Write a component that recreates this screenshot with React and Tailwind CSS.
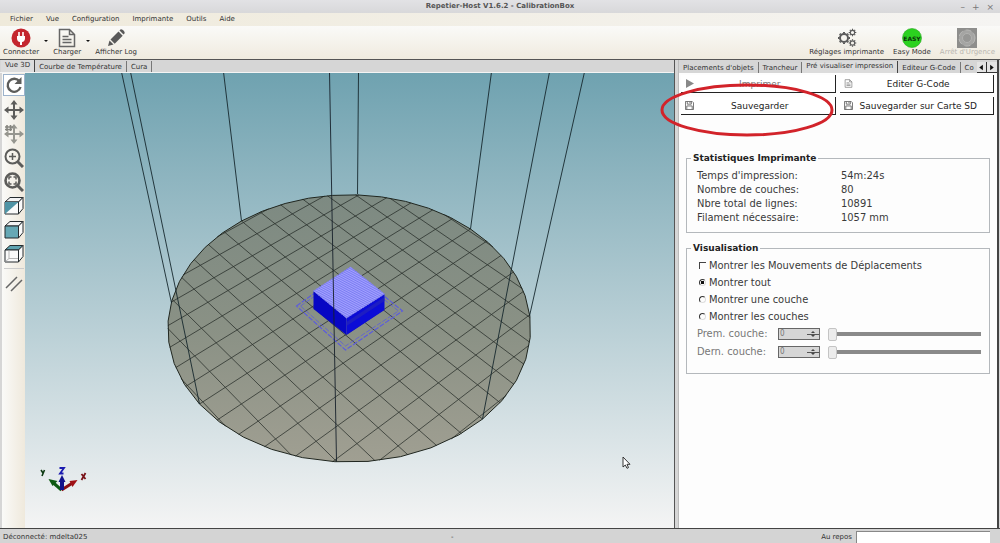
import { useState } from "react";

const MENUS = ["Fichier", "Vue", "Configuration", "Imprimante", "Outils", "Aide"];

const STATS = [
  ["Temps d'impression:", "54m:24s"],
  ["Nombre de couches:", "80"],
  ["Nbre total de lignes:", "10891"],
  ["Filament nécessaire:", "1057 mm"],
];

const MODES = [
  { id: "all", label: "Montrer tout" },
  { id: "one", label: "Montrer une couche" },
  { id: "range", label: "Montrer les couches" },
];

// perspective projection of the unit bed (radius 1) into the viewport
const project = (u, v) => {
  const w = 1 + 0.0937 * u + 0.1187 * v;
  return [(348.2 + 166.9 * u - 77.5 * v) / w, (308.3 - 57.85 * u - 61.07 * v) / w];
};

const toPoint = ([x, y]) => `${x.toFixed(1)},${y.toFixed(1)}`;

const RIM = Array.from({ length: 40 }, (_, i) => {
  const a = (i * Math.PI) / 20 + Math.PI / 4;
  return toPoint(project(Math.cos(a), Math.sin(a)));
}).join(" ");

const STEP = 0.14;
const GRID = [];
for (let i = -7; i <= 7; i++) {
  const p = i * STEP;
  const q = Math.sqrt(Math.max(0, 1 - p * p));
  GRID.push([project(p, -q), project(p, q)], [project(-q, p), project(q, p)]);
}

const FRAME = [
  [122, 72, 172, 303],
  [131, 72, 200, 404],
  [224, 72, 242, 221],
  [359, 72, 358, 194],
  [492, 72, 471, 229],
  [550, 72, 483, 419],
  [585, 72, 530, 316],
];

function Scene() {
  return (
    <svg viewBox="25 73 650 455" preserveAspectRatio="xMidYMid slice" className="block h-full w-full">
      <defs>
        <linearGradient id="bed" x1="0" y1="0" x2="0" y2="1">
          <stop offset="0" stopColor="#7d8a82" />
          <stop offset="0.5" stopColor="#8a9185" />
          <stop offset="1" stopColor="#a09f92" />
        </linearGradient>
        <pattern id="layers" width="3" height="2" patternUnits="userSpaceOnUse" patternTransform="rotate(28)">
          <rect width="3" height="2" fill="#a3a3ff" />
          <rect width="3" height="1" fill="#7b7bf2" />
        </pattern>
      </defs>
      <polygon points={RIM} fill="url(#bed)" stroke="#20261f" strokeWidth="1" />
      <g stroke="#1d231f" strokeWidth="0.8" opacity="0.85">
        {GRID.map(([a, b], i) => (
          <line key={i} x1={a[0]} y1={a[1]} x2={b[0]} y2={b[1]} />
        ))}
      </g>
      <g stroke="#16282e" strokeWidth="0.9">
        {FRAME.map(([x1, y1, x2, y2]) => (
          <line key={x1} x1={x1} y1={y1} x2={x2} y2={y2} />
        ))}
      </g>
      <g fill="none" stroke="#5c5cdc" strokeWidth="1.2" strokeDasharray="5 1.5">
        <polygon points="297,306 350,268 403,311 346,350" />
        <polygon points="301,306 350,272 399,311 346,346" strokeWidth="0.8" />
      </g>
      <polygon points="314,291 347,318 347,335 314,309" fill="#0707c4" />
      <polygon points="347,318 385,294 385,310 347,335" fill="#0c0cd6" />
      <polygon points="347,326 385,301 385,297 347,322" fill="#2a2ab4" opacity="0.6" />
      <polygon points="314,291 351,267 385,294 347,318" fill="url(#layers)" stroke="#7f7ff4" strokeDasharray="2 1" strokeWidth="1" />
      <line x1="330" y1="72" x2="337" y2="461" stroke="#16202a" strokeWidth="0.9" />
      <AxisMarker />
    </svg>
  );
}

function AxisMarker() {
  return (
    <g strokeWidth="3" fill="none">
      <path d="M62 490 L54 483" stroke="#0d5a12" />
      <path d="M49 479 L58 481 L53 486 Z" fill="#0d5a12" />
      <path d="M62 490 L73 483" stroke="#8a0f14" />
      <path d="M78 480 L70 481 L73 487 Z" fill="#a01015" />
      <path d="M62.500 490 L62.500 481" stroke="#12128c" strokeWidth="4" />
      <path d="M62.500 475 L59 482 L66 482 Z" fill="#12128c" />
      <path d="M41.500 470 L43.500 473 M45 470 L42.500 476" stroke="#0c3a12" strokeWidth="1.600" />
      <path d="M60 468 L64.500 468 L60.500 473.500 L64 473.500" stroke="#1a1ab0" strokeWidth="1.800" />
      <path d="M82 474 L86 479 M86 473 L82 480" stroke="#7a1218" strokeWidth="1.800" />
    </g>
  );
}

function PlugIcon() {
  return (
    <svg viewBox="0 0 20 20" className="h-5 w-5">
      <circle cx="10" cy="10" r="9.500" fill="#c4262e" />
      <path d="M6 8h8v2.500c0 2-1.300 3.300-3 3.500v3H9v-3c-1.700-.2-3-1.500-3-3.500z" fill="#fff" />
      <path d="M8 4v5M12 4v5" stroke="#fff" strokeWidth="1.600" />
    </svg>
  );
}

function FileIcon({ className }) {
  return (
    <svg viewBox="0 0 18 20" className={className} fill="none" stroke="currentColor" strokeWidth="1.500">
      <path d="M1.500 1.500h10l5 5v12h-15z M11.500 1.500v5h5" />
      <path d="M4.500 8.500h6M4.500 11.500h9M4.500 14.500h9" />
    </svg>
  );
}

function PencilIcon() {
  return (
    <svg viewBox="0 0 20 20" className="h-5 w-5" fill="#595959">
      <path d="M2 18l1.500-5.500 4 4z" />
      <path d="M4.500 11.500l8-8 4.200 4.200-8 8z" />
      <path d="M13.500 2.500l1-1c1.500-1 5 2.500 4 4l-1 1z" />
    </svg>
  );
}

function Gear({ cx, cy, r, width }) {
  return (
    <g stroke="#5b5b5b" fill="none">
      <circle cx={cx} cy={cy} r={r} strokeWidth={width} />
      {[0, 45, 90, 135, 180, 225, 270, 315].map((a) => (
        <path key={a} d={`M${cx} ${cy - r - width / 2 + 0.3}v-1.300`} strokeWidth={width} transform={`rotate(${a} ${cx} ${cy})`} />
      ))}
    </g>
  );
}

function GearsIcon() {
  return (
    <svg viewBox="0 0 20 20" className="h-5 w-5">
      <Gear cx={7} cy={10} r={4} width={2} />
      <Gear cx={15.5} cy={4.5} r={2.2} width={1.2} />
      <Gear cx={15.5} cy={15} r={2.2} width={1.2} />
    </svg>
  );
}

function EasyIcon() {
  return (
    <svg viewBox="0 0 20 20" className="h-5 w-5">
      <circle cx="10" cy="10" r="9.500" fill="#2bd21f" stroke="#27a51f" strokeWidth="0.600" />
      <text x="10" y="12.500" textAnchor="middle" fontSize="6" fontWeight="700" fontFamily="DejaVu Sans, sans-serif" fill="#0c360b">
        EASY
      </text>
    </svg>
  );
}

function StopIcon() {
  return (
    <svg viewBox="0 0 20 20" className="h-5 w-5">
      <rect width="20" height="20" fill="#8e8e8c" />
      <circle cx="10" cy="10" r="8" fill="#a5a5a3" stroke="#b8b8b6" strokeWidth="1" strokeDasharray="6 3" />
      <circle cx="10" cy="10" r="4.500" fill="#979795" stroke="#b2b2b0" />
    </svg>
  );
}

function SaveIcon() {
  return (
    <svg viewBox="0 0 10 10" className="h-[9px] w-[9px]" fill="none" stroke="#666" strokeWidth="1">
      <path d="M.5.500h7.500l1.500 1.500v7.500h-9z M2.500.500v3h4.500v-3 M2 9.500v-4h6v4 M5.500 1v1.500" />
    </svg>
  );
}

function ArrowsIcon({ faded }) {
  const color = faded ? "#96968f" : "#5c5c5a";
  return (
    <svg viewBox="0 0 20 20" className="h-5 w-5">
      <path d="M10 3v14M3 10h14" stroke={color} strokeWidth="2" />
      <path d="M10 0l3.500 4.500h-7zM10 20l3.500-4.500h-7zM0 10l4.500-3.500v7zM20 10l-4.500-3.500v7z" fill={color} />
      {faded && <path d="M1 3h8M1 5.500h7M3 1v6M6.500 1v6" stroke="#85857f" strokeWidth="1.600" />}
    </svg>
  );
}

function RotateIcon() {
  return (
    <svg viewBox="0 0 20 20" className="h-5 w-5">
      <path d="M15.500 6.500a6.500 6.500 0 1 0 1 5.500" fill="none" stroke="#5c5c5a" strokeWidth="2.400" />
      <path d="M17.500 2v7h-7z" fill="#5c5c5a" />
    </svg>
  );
}

function LensIcon({ fit }) {
  return (
    <svg viewBox="0 0 20 20" className="h-5 w-5" fill="none" stroke="#5c5c5a">
      <circle cx="8.500" cy="8.500" r="7" strokeWidth={fit ? 2.6 : 2} />
      <path d="M13.500 13.500l5.500 5.500" strokeWidth="3" />
      {fit ? (
        <path d="M5 7.500v-2.500h2.500M9.500 5h2.500v2.500M12 9.500v2.500h-2.500M7.500 12h-2.500v-2.500" strokeWidth="1.500" />
      ) : (
        <path d="M8.500 5v7M5 8.500h7" strokeWidth="1.500" />
      )}
    </svg>
  );
}

function CubeIcon({ face }) {
  return (
    <svg viewBox="0 0 20 20" className="h-5 w-5" stroke="#252b2e" strokeWidth="1" strokeLinejoin="round">
      <path d="M1 6l5-4.500h13l-4.500 4.500z" fill={face === "top" ? "#5fa3b0" : "#f4f4f4"} />
      <path d="M14.500 6l4.500-4.500v11l-4.500 5.500z" fill="#fafafa" />
      <path d="M1 6h13.500v12h-13.500z" fill={face === "front" ? "#66a8b5" : "#fafafa"} />
      {face === "half" && <path d="M1 6h13.500l-13.500 12z" fill="#4f94a6" stroke="none" />}
      {face === "top" && <path d="M5 6.500v8h9M5 14.500l-3.500 3" fill="none" stroke="#b5b5b5" />}
    </svg>
  );
}

function ParallelIcon() {
  return (
    <svg viewBox="0 0 20 20" className="h-5 w-5" stroke="#666" strokeWidth="1.500">
      <path d="M2 15L13 4M7 18L18 7" />
    </svg>
  );
}

const TOOLS = [
  ["Rotation", <RotateIcon />],
  ["Déplacer la vue", <ArrowsIcon />],
  ["Déplacer l'objet", <ArrowsIcon faded />],
  ["Zoom", <LensIcon />],
  ["Ajuster", <LensIcon fit />],
  ["Vue isométrique", <CubeIcon face="half" />],
  ["Vue de face", <CubeIcon face="front" />],
  ["Vue de dessus", <CubeIcon face="top" />],
];

function ToolbarButton({ icon, label, disabled }) {
  return (
    <button type="button" disabled={disabled} className="flex flex-col items-center whitespace-nowrap disabled:text-[#b9b6b0]">
      {icon}
      <span className="leading-[9px]">{label}</span>
    </button>
  );
}

function DropArrow() {
  return (
    <svg viewBox="0 0 4 2" className="mt-3 h-[2px] w-1">
      <path d="M0 0h4l-2 2z" fill="#111" />
    </svg>
  );
}

function Tab({ active, children }) {
  return (
    <button
      type="button"
      role="tab"
      aria-selected={Boolean(active)}
      className={`shrink-0 whitespace-nowrap border-r px-1 leading-[10px] ${
        active ? "h-[12px] border-[#444] bg-[#dcdcdc] pb-[2px]" : "h-[11px] border-[#777]"
      }`}
    >
      {children}
    </button>
  );
}

function PanelButton({ icon, children, disabled }) {
  return (
    <button
      type="button"
      disabled={disabled}
      className="flex h-[18px] min-w-0 items-center border-b border-r border-[#222] bg-white px-1 disabled:text-[#777]"
    >
      <span className="flex w-3 shrink-0">{icon}</span>
      <span className="flex-1 whitespace-nowrap pr-2 text-center">{children}</span>
    </button>
  );
}

function LayerRow({ id, label }) {
  return (
    <div className="flex h-[18px] items-center text-[#777]">
      <label htmlFor={id} className="w-[81px] shrink-0">
        {label}
      </label>
      <div className="flex h-[12px] w-[42px] shrink-0 border border-[#666] bg-[#d6d6d6]">
        <input id={id} type="text" defaultValue="0" disabled className="w-0 min-w-0 flex-1 pl-px text-[8px] leading-[10px]" />
        <span className="flex w-3 flex-col divide-y divide-[#555]">
          <button type="button" disabled aria-label="Augmenter" className="flex flex-1 items-center justify-center">
            <svg viewBox="0 0 6 3" className="h-[3px] w-[6px]" fill="#444"><path d="M1 3l2-2 2 2z" /></svg>
          </button>
          <button type="button" disabled aria-label="Diminuer" className="flex flex-1 items-center justify-center">
            <svg viewBox="0 0 6 3" className="h-[3px] w-[6px]" fill="#444"><path d="M1 0l2 2 2-2z" /></svg>
          </button>
        </span>
      </div>
      <input
        type="range"
        disabled
        defaultValue="0"
        aria-label={label}
        className="ml-2 h-[13px] min-w-0 flex-1 appearance-none bg-transparent bg-[linear-gradient(#8a8a8a,#8a8a8a)] bg-[length:100%_4px] bg-center bg-no-repeat [&::-webkit-slider-thumb]:h-[13px] [&::-webkit-slider-thumb]:w-[9px] [&::-webkit-slider-thumb]:appearance-none [&::-webkit-slider-thumb]:rounded-[2px] [&::-webkit-slider-thumb]:border [&::-webkit-slider-thumb]:border-[#c4c4c4] [&::-webkit-slider-thumb]:bg-[#ececec]"
      />
    </div>
  );
}

function PreviewPanel() {
  const [mode, setMode] = useState("all");
  const [moves, setMoves] = useState(false);

  return (
    <div className="flex-1 bg-[#fdfdfd] pl-[2px] pr-[3px] pt-[2px] text-[9px] leading-[14px] text-[#3a3a3a]">
      <div className="relative grid grid-cols-2 gap-1 text-[#222]">
        <PanelButton
          disabled
          icon={<svg viewBox="0 0 9 9" className="h-[9px] w-[9px]"><path d="M1 0l8 4.500-8 4.500z" fill="#888" /></svg>}
        >
          Imprimer
        </PanelButton>
        <PanelButton icon={<FileIcon className="h-[9px] w-[9px] text-[#777]" />}>Editer G-Code</PanelButton>
        <PanelButton icon={<SaveIcon />}>Sauvegarder</PanelButton>
        <PanelButton icon={<SaveIcon />}>Sauvegarder sur Carte SD</PanelButton>
        <svg viewBox="0 0 174 56" className="pointer-events-none absolute -left-[21px] top-[7px] h-14 w-[174px]" fill="none">
          <ellipse cx="87" cy="28" rx="85" ry="25" stroke="#d2232a" strokeWidth="3" />
        </svg>
      </div>

      <div className="pl-[5px] pr-1 pt-[37px] font-['DejaVu_Sans_Condensed','DejaVu_Sans',sans-serif] text-[11px]">
        <fieldset className="border border-[#b4b8bc] pb-[7px] pl-[10px] pr-2">
          <legend className="-ml-[6px] px-[2px] font-['DejaVu_Sans',sans-serif] text-[9px] font-bold leading-[12px] text-[#222]">
            Statistiques Imprimante
          </legend>
          <dl className="grid grid-cols-[144px_1fr] pt-[5px]">
            {STATS.map(([name, value]) => (
              <div key={name} className="contents">
                <dt>{name}</dt>
                <dd>{value}</dd>
              </div>
            ))}
          </dl>
        </fieldset>

        <fieldset className="mt-[9px] border border-[#b4b8bc] pb-[12px] pl-[10px] pr-2">
          <legend className="-ml-[6px] px-[2px] font-['DejaVu_Sans',sans-serif] text-[9px] font-bold leading-[12px] text-[#222]">
            Visualisation
          </legend>
          <div className="flex flex-col pl-[2px] pt-[3px]">
            <label className="flex h-[17px] items-center gap-[3px]">
              <input
                type="checkbox"
                checked={moves}
                onChange={(e) => setMoves(e.target.checked)}
                className="h-[7px] w-[7px] appearance-none border-l border-t border-[#444] checked:bg-[#444]"
              />
              Montrer les Mouvements de Déplacements
            </label>
            {MODES.map(({ id, label }) => (
              <label key={id} className="flex h-[17px] items-center gap-[3px]">
                <input
                  type="radio"
                  name="mode"
                  checked={mode === id}
                  onChange={() => setMode(id)}
                  className="h-[7px] w-[7px] appearance-none rounded-full border border-b-[#ddd] border-l-[#333] border-r-[#ddd] border-t-[#333] checked:bg-[radial-gradient(#111_40%,transparent_50%)]"
                />
                {label}
              </label>
            ))}
          </div>
          <LayerRow id="first-layer" label="Prem. couche:" />
          <LayerRow id="last-layer" label="Dern. couche:" />
        </fieldset>
      </div>
    </div>
  );
}

export default function App() {
  return (
    <div className="flex h-screen flex-col overflow-hidden bg-[#d6d6d6] font-['DejaVu_Sans','Liberation_Sans',sans-serif] text-[7px] text-[#333]">
      <header className="grid h-[13px] shrink-0 grid-cols-[1fr_auto_1fr] items-center bg-linear-to-b from-[#e2e2e5] to-[#d8d8da] text-[#555]">
        <h1 className="col-start-2 text-[7px] font-bold">Repetier-Host V1.6.2 - CalibrationBox</h1>
        <div className="flex justify-end gap-[7px] pr-[6px] text-[9px] leading-[12px] text-[#777]">
          <button type="button" aria-label="Réduire">–</button>
          <button type="button" aria-label="Agrandir">+</button>
          <button type="button" aria-label="Fermer">×</button>
        </div>
      </header>

      <nav className="flex h-[13px] shrink-0 items-center gap-[13px] bg-linear-to-r from-[#efeadb] to-[#f5f4f2] px-[10px]">
        {MENUS.map((menu) => (
          <button key={menu} type="button">{menu}</button>
        ))}
      </nav>

      <div className="flex h-[34px] shrink-0 items-start justify-between border-b border-[#555] bg-linear-to-b from-[#fafaf8] to-[#f0ebdf] pl-[3px] pr-[5px] pt-[2px]">
        <div className="flex items-start gap-[5px]">
          <ToolbarButton icon={<PlugIcon />} label="Connecter" />
          <DropArrow />
          <ToolbarButton icon={<FileIcon className="h-5 w-[18px] text-[#666]" />} label="Charger" />
          <DropArrow />
          <ToolbarButton icon={<PencilIcon />} label="Afficher Log" />
        </div>
        <div className="flex gap-[9px]">
          <ToolbarButton icon={<GearsIcon />} label="Réglages imprimante" />
          <ToolbarButton icon={<EasyIcon />} label="Easy Mode" />
          <ToolbarButton icon={<StopIcon />} label="Arrêt d'Urgence" disabled />
        </div>
      </div>

      <main className="flex min-h-0 flex-1">
        <section className="flex min-w-0 flex-1 flex-col border-r border-[#555]">
          <div role="tablist" className="flex h-[13px] shrink-0 items-end border-b border-[#f4f4f4] pl-px">
            <Tab active>Vue 3D</Tab>
            <Tab>Courbe de Température</Tab>
            <Tab>Cura</Tab>
          </div>
          <div className="flex min-h-0 flex-1 pl-[2px]">
            <aside className="flex w-[23px] shrink-0 flex-col items-center gap-[4px] bg-linear-to-r from-[#fafaf8] to-[#efe9dc] pt-px">
              {TOOLS.map(([name, icon], i) => (
                <button
                  key={name}
                  type="button"
                  aria-label={name}
                  className={i === 0 ? "border border-[#9db3cc] bg-white" : ""}
                >
                  {icon}
                </button>
              ))}
              <button type="button" aria-label="Projection parallèle" className="border-t border-[#ccc] pt-[4px]">
                <ParallelIcon />
              </button>
            </aside>
            <div className="relative min-w-0 flex-1 bg-linear-to-b from-[#6fa2b0] to-[#f4f4f4]">
              <Scene />
              <svg viewBox="0 0 9 13" className="absolute bottom-[59px] right-[43px] h-[13px] w-[9px]">
                <path d="M1 1v10l2.300-2 1.700 3.300 1.500-.7-1.500-3.300h3z" fill="#fff" stroke="#222" strokeWidth="0.900" />
              </svg>
            </div>
          </div>
        </section>

        <section className="ml-[3px] mr-px flex w-[321px] shrink-0 flex-col border-l border-r-2 border-l-[#bbb] border-r-[#444]">
          <div role="tablist" className="flex h-[13px] shrink-0 items-end overflow-hidden">
            <Tab>Placements d'objets</Tab>
            <Tab>Trancheur</Tab>
            <Tab active>Pré visualiser impression</Tab>
            <Tab>Editeur G-Code</Tab>
            <span className="min-w-0 flex-1 overflow-hidden whitespace-nowrap pl-1 leading-[10px]">Co</span>
            <button type="button" aria-label="Précédent" className="h-[11px] w-[10px] shrink-0 border-b border-r border-[#333] bg-[#e4e4e4]">
              <svg viewBox="0 0 10 10" className="h-[9px] w-[9px]"><path d="M6.500 2v6l-4-3z" fill="#111" /></svg>
            </button>
            <button type="button" aria-label="Suivant" className="h-[11px] w-[10px] shrink-0 border-b border-[#333] bg-[#e4e4e4]">
              <svg viewBox="0 0 10 10" className="h-[9px] w-[9px]"><path d="M3.500 2v6l4-3z" fill="#111" /></svg>
            </button>
          </div>
          <PreviewPanel />
        </section>
      </main>

      <footer className="flex h-[15px] shrink-0 items-center border-t border-[#444] bg-[#d4d4d4] pl-[3px] pr-[10px] pt-[2px]">
        <span className="w-[448px]">Déconnecté: mdelta025</span>
        <span className="flex-1">-</span>
        <label htmlFor="progress" className="pr-[4px]">Au repos</label>
        <input id="progress" readOnly className="h-[12px] w-[134px] border-l border-t border-[#888] bg-white" />
      </footer>
    </div>
  );
}
